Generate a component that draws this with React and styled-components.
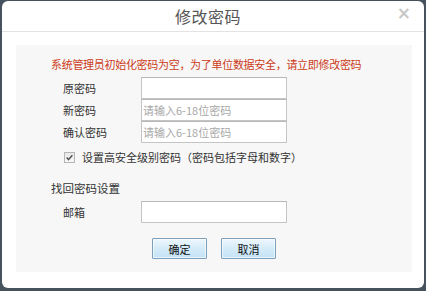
import { createGlobalStyle, styled } from "styled-components";

const GlobalStyle = createGlobalStyle`
  html, body {
    margin: 0;
    padding: 0;
    background: #46525d;
  }
  body {
    font-family: "Noto Sans CJK SC", "Noto Sans", sans-serif;
  }
`;

function Check() {
  return (
    <svg width="11" height="11" viewBox="0 0 11 11">
      <path d="M2 5.5 L4.3 8 L9 2.8" fill="none" stroke="#555" strokeWidth="1.8" />
    </svg>
  );
}

export default function App() {
  return (
    <>
      <GlobalStyle />
      <Dialog>
        <Header>
          <Title>修改密码</Title>
          <Close>×</Close>
        </Header>
        <Body>
          <Panel>
            <Notice>系统管理员初始化密码为空，为了单位数据安全，请立即修改密码</Notice>
            <Fields>
              <Row>
                <Label>原密码</Label>
                <Input type="password" />
              </Row>
              <Row>
                <Label>新密码</Label>
                <Input type="password" placeholder="请输入6-18位密码" />
              </Row>
              <Row>
                <Label>确认密码</Label>
                <Input type="password" placeholder="请输入6-18位密码" />
              </Row>
            </Fields>
            <CheckRow>
              <CheckBox><Check /></CheckBox>
              <span>设置高安全级别密码（密码包括字母和数字）</span>
            </CheckRow>
            <Section>找回密码设置</Section>
            <Row $top={5}>
              <Label>邮箱</Label>
              <Input type="text" />
            </Row>
            <Buttons>
              <Button>确定</Button>
              <Button>取消</Button>
            </Buttons>
          </Panel>
        </Body>
      </Dialog>
    </>
  );
}

const Dialog = styled.div`
  width: 422px;
  height: 287px;
  margin: 1px 0 0 2px;
  background: #fff;
  border-radius: 6px;
  display: flex;
  flex-direction: column;
  box-sizing: border-box;
`;

const Header = styled.div`
  position: relative;
  height: 30px;
  border-bottom: 1px solid #e3e3e3;
  display: flex;
  align-items: center;
  justify-content: center;
  padding-right: 10px;
`;

const Title = styled.div`
  font-size: 16px;
  color: #555;
  letter-spacing: 0.5px;
`;

const Close = styled.span`
  position: absolute;
  right: 13px;
  top: 2px;
  font-family: "DejaVu Sans", sans-serif;
  font-size: 17px;
  font-weight: bold;
  color: #c8c8c8;
`;

const Body = styled.div`
  flex: 1;
  display: flex;
  padding: 13px 12px 16px 14px;
`;

const Panel = styled.div`
  flex: 1;
  background: #f7f7f7;
  display: flex;
  flex-direction: column;
  font-size: 11px;
  color: #333;
  padding-top: 11px;
`;

const Notice = styled.div`
  color: #cc3b1a;
  line-height: 16px;
  padding-left: 35px;
  letter-spacing: -0.3px;
`;

const Fields = styled.div`
  display: flex;
  flex-direction: column;
  margin-top: 5px;
`;

const Row = styled.div`
  display: flex;
  align-items: center;
  padding-left: 47px;
  margin-top: ${(p) => p.$top || 0}px;
`;

const Label = styled.div`
  width: 78px;
`;

const Input = styled.input`
  width: 146px;
  height: 22px;
  box-sizing: border-box;
  margin: 0;
  border: 1px solid #c4c4c4;
  border-top-color: #b8b8b8;
  background: #fff;
  font-family: inherit;
  font-size: 11px;
  padding: 0 1px;
  outline: none;
  &::placeholder {
    color: #a8a8a8;
  }
`;

const CheckRow = styled.div`
  display: flex;
  align-items: center;
  gap: 7px;
  padding-left: 48px;
  margin-top: 6px;
  line-height: 16px;
`;

const CheckBox = styled.span`
  width: 11px;
  height: 11px;
  box-sizing: border-box;
  border: 1px solid #b5b5b5;
  background: linear-gradient(#e8e8e8, #f8f8f8);
  display: flex;
  align-items: center;
  justify-content: center;
`;

const Section = styled.div`
  padding-left: 35px;
  margin-top: 15px;
  line-height: 16px;
  font-size: 11.5px;
`;

const Buttons = styled.div`
  display: flex;
  justify-content: center;
  gap: 14px;
  margin-top: 15px;
`;

const Button = styled.button`
  width: 55px;
  height: 21px;
  margin: 0;
  padding: 0;
  border: 1px solid #7b9fbd;
  border-radius: 1px;
  background: linear-gradient(#eef7fd, #d4ebf9 50%, #c4e3f6);
  font-family: inherit;
  font-size: 11px;
  color: #111;
  box-shadow: inset 0 0 0 1px rgba(255, 255, 255, 0.6);
`;
